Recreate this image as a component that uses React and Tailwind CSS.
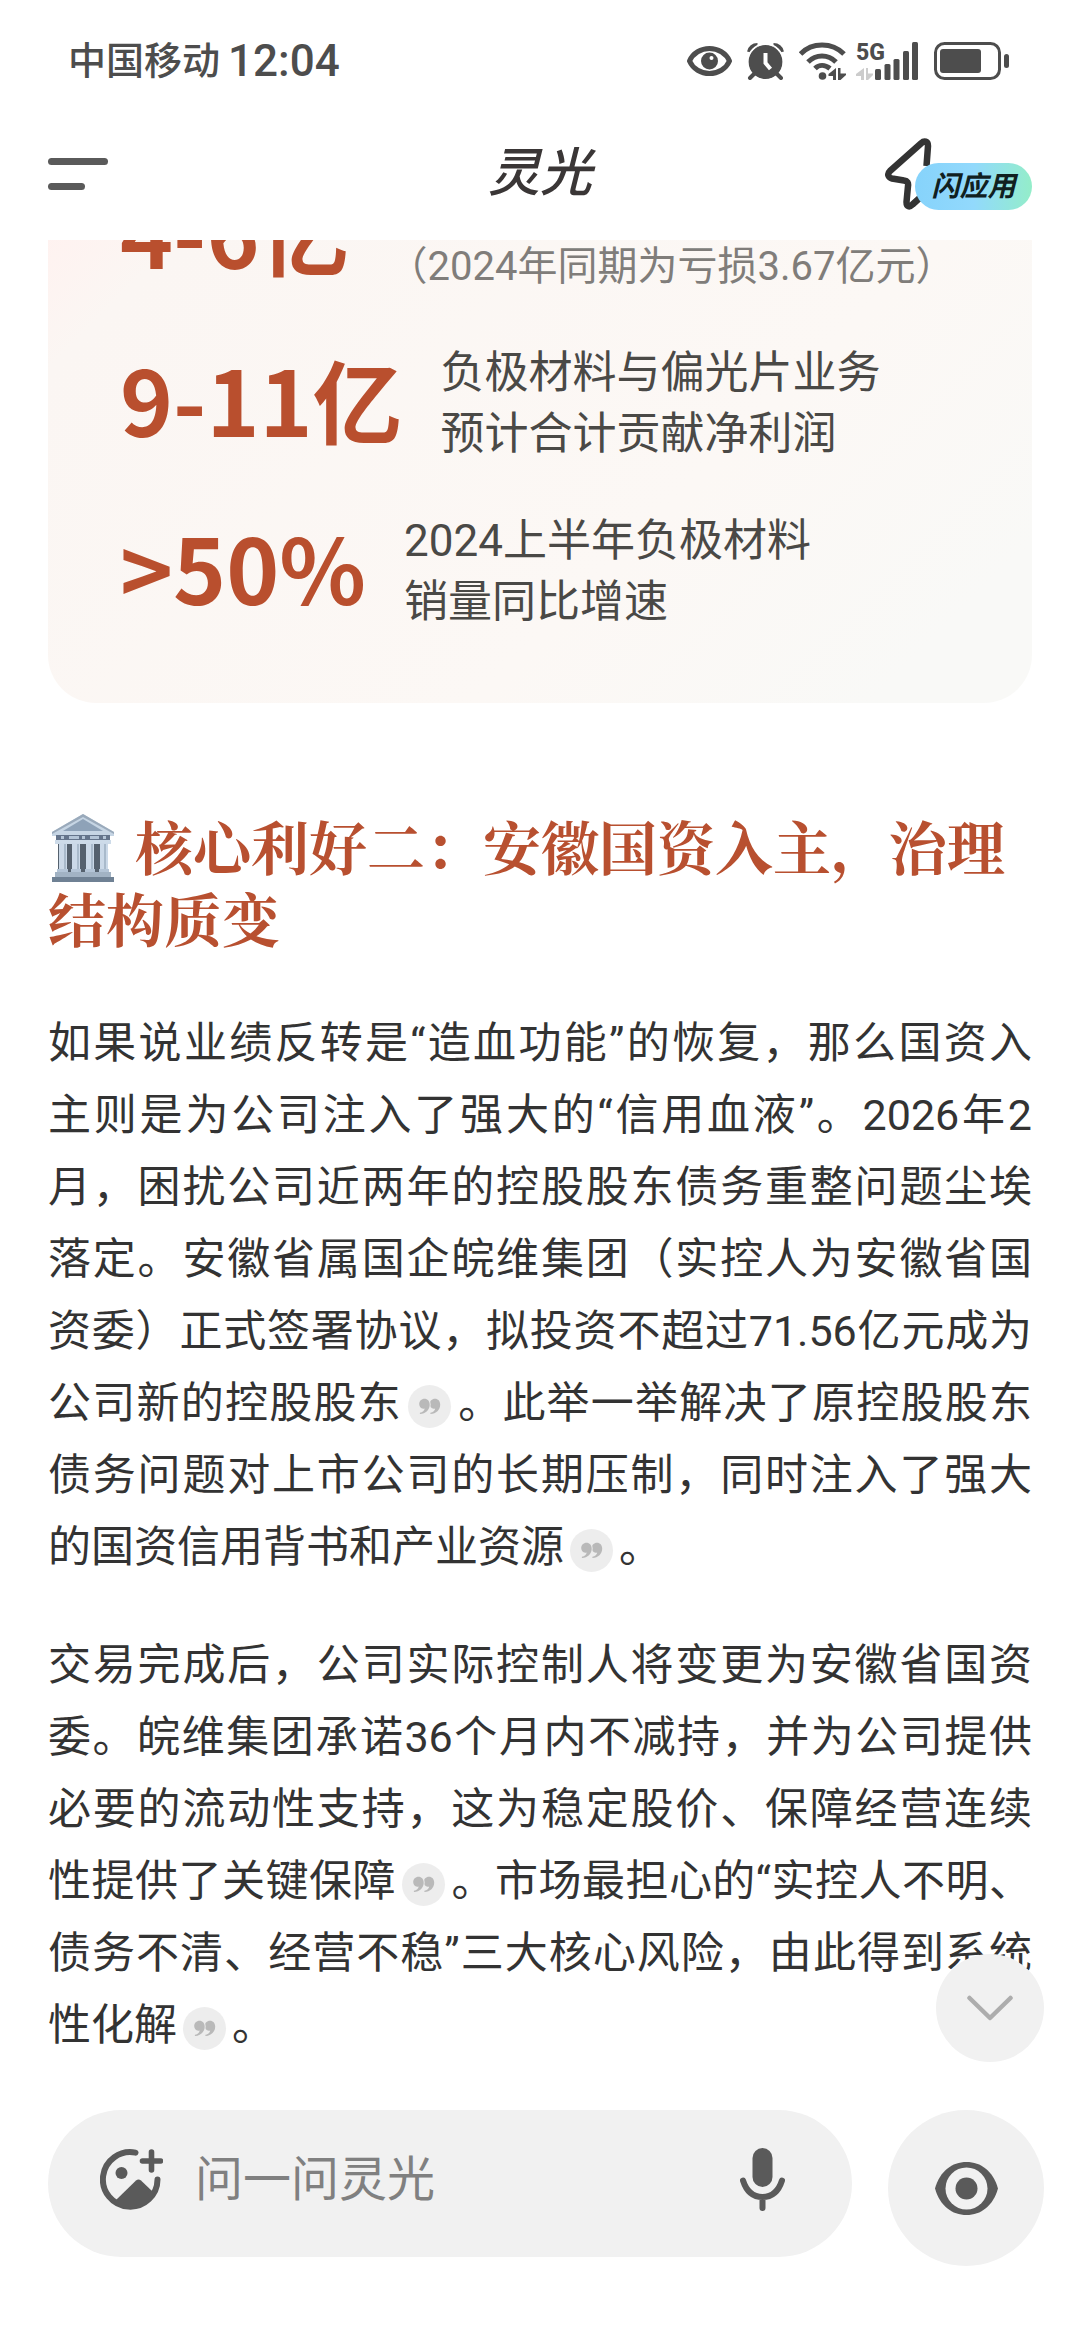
import { useState } from 'react';

const stats = [
  { value: '4-6亿', lines: ['（2024年同期为亏损3.67亿元）'], note: true },
  { value: '9-11亿', lines: ['负极材料与偏光片业务', '预计合计贡献净利润'] },
  { value: '>50%', lines: ['2024上半年负极材料', '销量同比增速'] },
];

function StatusBar() {
  return (
    <div className="flex h-[122px] items-center justify-between pl-[68px] pr-[71px] text-[#4d4d4d]">
      <div className="flex items-center gap-2 font-medium">
        <span className="text-[38px]">中国移动</span>
        <span className="text-[44px]">12:04</span>
      </div>
      <div className="flex items-center">
        {/* eye comfort */}
        <svg className="mr-[15px] h-[30px] w-[45px]" viewBox="0 0 45 30" fill="none">
          <path d="M2.5 15C6 7 14 2.5 22.5 2.5S39 7 42.5 15C39 23 31 27.5 22.5 27.5S6 23 2.5 15z" stroke="currentColor" strokeWidth="5" strokeLinejoin="round" />
          <circle cx="22.5" cy="15" r="8.5" fill="currentColor" />
          <circle cx="24.5" cy="12" r="2" fill="#fff" />
        </svg>
        {/* alarm */}
        <svg className="mr-[15px] h-[37px] w-[37px]" viewBox="0 0 37 37" fill="none" stroke="currentColor">
          <circle cx="18.5" cy="19" r="17" fill="currentColor" stroke="none" />
          <path d="M2 9C3 5 6 2 10.500 2M26.500 2C31 2 34 5 35 9" strokeWidth="4" />
          <circle cx="18.5" cy="19" r="18" stroke="#fff" strokeWidth="1.500" />
          <path d="M7 31l-4 4M30 31l4 4" strokeWidth="4" strokeLinecap="round" />
          <path d="M18.500 10v10l5 6" stroke="#fff" strokeWidth="4" />
        </svg>
        {/* wifi */}
        <svg className="mr-[10px] h-[38px] w-[47px]" viewBox="0 0 47 38" fill="none" stroke="currentColor">
          <path d="M1.500 12C13 0 33 0 45 12M9 20c8-8 20-8 28 0M16 26.500c4-4 10-4 15 0" strokeWidth="5" />
          <circle cx="23.500" cy="34" r="3.800" fill="currentColor" stroke="none" />
          <path d="M37 26v12h-3v-4h-4.500v-2zM39 26v12h2.500l5.500-5v-1.500h-5.500V26z" fill="currentColor" stroke="none" />
        </svg>
        {/* signal */}
        <svg className="mr-[16px] h-[38px] w-[62px] overflow-visible" viewBox="0 0 62 38" fill="currentColor">
          <text x="0" y="18" fontSize="23" fontWeight="800" fontFamily="Roboto">5G</text>
          <path d="M8 26v12H5v-4H0v-2zM10 26v12h2l5-5v-1.500h-5V26z" fill="#cccccc" />
          <rect x="19" y="27" width="6" height="11" rx="1.500" />
          <rect x="28.500" y="22" width="6" height="16" rx="1.500" />
          <rect x="37.500" y="17" width="6" height="21" rx="1.500" />
          <rect x="47" y="9" width="6" height="29" rx="1.500" />
          <rect x="56" y="0" width="6" height="38" rx="1.500" />
        </svg>
        {/* battery */}
        <svg className="h-[38px] w-[75px]" viewBox="0 0 75 38" fill="none">
          <rect x="1.500" y="1.500" width="64" height="35" rx="9" stroke="currentColor" strokeWidth="3" />
          <rect x="6" y="7" width="41" height="24" rx="3" fill="currentColor" />
          <rect x="70" y="12" width="5" height="14" rx="2.500" fill="currentColor" />
        </svg>
      </div>
    </div>
  );
}

function Header() {
  return (
    <header className="relative z-10 bg-white">
      <StatusBar />
      <div className="grid h-[118px] grid-cols-3 items-center px-12 pb-[14px]">
        <button type="button" aria-label="菜单" className="flex flex-col items-start gap-[18px] justify-self-start">
          <span className="h-[7px] w-[60px] rounded-full bg-[#5a5a5a]" />
          <span className="h-[7px] w-[37px] rounded-full bg-[#5a5a5a]" />
        </button>
        <h1 className="justify-self-center text-[52px] leading-none font-medium text-[#3a3636] italic">灵光</h1>
        <button type="button" className="relative h-[72px] w-[147px] justify-self-end">
          <svg className="h-[72px] w-[50px]" viewBox="0 0 50 72" fill="none">
            <path d="M41.500 28L43 8C43 3 39 2.500 36.500 5L5 33C2 36 3 39.500 7 40.500L19 42.500C22.500 43 23.500 45 23 48L21.500 64C21.500 69 24.500 69.500 27.500 66.500L38 57" stroke="#333" strokeWidth="6.500" strokeLinejoin="round" />
          </svg>
          <span className="absolute right-0 bottom-0 flex h-[47px] w-[117px] items-center justify-center rounded-full bg-linear-to-r from-[#86d3fb] via-[#92d9fc] to-[#94edc9] text-[28px] font-bold text-[#10201f] italic">闪应用</span>
        </button>
      </div>
    </header>
  );
}

function StatsCard() {
  return (
    <section className="-mt-[139px] flex flex-col gap-[46px] rounded-[48px] bg-[linear-gradient(135deg,#fff2f0_8%,#fbf6f3_17%,#fcf8f5_65%,#f9f9f7_90%)] px-[72px] pt-[74px] pb-[70px]">
      {stats.map((item) => (
        <div key={item.value} className="flex h-[122px] items-center gap-[38px]">
          <strong className="pb-3 font-['Noto_Sans_CJK_SC',sans-serif] text-[90px] leading-none font-bold text-[#b94f2e]">{item.value}</strong>
          <p className={item.note ? 'self-end text-[40px] leading-[61px] text-[#807d7a]' : 'text-[44px] leading-[61px] text-[#4a4946]'}>
            {item.lines.map((line) => (
              <span key={line} className="block">{line}</span>
            ))}
          </p>
        </div>
      ))}
    </section>
  );
}

function BankIcon() {
  return (
    <svg className="-my-4 mr-[21px] ml-1 inline-block h-[68px] w-[62px] align-[4px]" viewBox="0 0 62 68">
      <path d="M31 0L62 18v4H0v-4z" fill="#c6d5e4" />
      <path d="M31 0L0 18v2L31 3l31 17v-2z" fill="#9aaabb" />
      <path d="M31 5L51 17H11z" fill="#8ea2b8" />
      <path d="M4 21h54v5H4z" fill="#64748b" />
      <path d="M9 22h3v3H9zM17 22h10v3H17zM30 22h3v3h-3zM38 22h9v3h-9zM51 22h3v3h-3z" fill="#b4c5d7" />
      <path d="M3 26h56v4H3z" fill="#cddbe9" />
      <path d="M6 30h50v28H6z" fill="#55616e" />
      <path d="M7 29h8v28H7zM20 29h8v28h-8zM34 29h8v28h-8zM48 29h8v28h-8z" fill="#cbd9e8" />
      <path d="M12 30h2v26h-2zM25 30h2v26h-2zM39 30h2v26h-2zM52 30h2v26h-2z" fill="#a9bacb" />
      <path d="M5 55h11v4H5zM19 55h10v4H19zM33 55h10v4H33zM47 55h10v4H47z" fill="#b4c5d7" />
      <path d="M3 58h56v5H3z" fill="#a2b3c4" />
      <path d="M0 63h62v5H0z" fill="#6f8194" />
    </svg>
  );
}

function Cite() {
  return (
    <button type="button" aria-label="引用来源" className="mx-[6px] inline-block size-[43px] rounded-full bg-[#ededed] align-middle">
      <svg viewBox="0 0 43 43" fill="#b9b9b9">
        <path d="M27 13.800c3 0 5.200 2.300 5.200 5.900 0 5-4 9.100-9.800 9.300v-1.200c2.800-.5 4.500-2.100 4.800-4.300-.5.200-1 .2-1.500.2-2.400 0-4-2-4-4.600 0-2.900 2.300-5.300 5.300-5.300z" />
        <path d="M16.500 13.800c3 0 5.200 2.300 5.200 5.900 0 5-4 9.100-9.800 9.300v-1.200c2.800-.5 4.500-2.100 4.800-4.300-.5.200-1 .2-1.500.2-2.400 0-4-2-4-4.600 0-2.900 2.300-5.300 5.300-5.300z" stroke="#ededed" strokeWidth="2" paintOrder="stroke" />
      </svg>
    </button>
  );
}

function Composer() {
  const [text, setText] = useState('');

  return (
    <footer className="relative z-10 flex items-start gap-9 bg-white pb-[74px] pl-12 pr-9">
      <button type="button" aria-label="回到底部" className="absolute -top-[156px] right-9 flex size-[108px] items-center justify-center rounded-full bg-[#f1f1f1]">
        <svg className="h-[26px] w-[46px]" viewBox="0 0 46 26" fill="none">
          <path d="M2.500 3L23 23L43.500 3" stroke="#adadad" strokeWidth="4.500" strokeLinecap="round" strokeLinejoin="round" />
        </svg>
      </button>
      <div className="flex h-[147px] min-w-0 flex-1 items-center rounded-full bg-[#f1f1f1] pr-[67px] pb-2 pl-[52px]">
        <button type="button" aria-label="添加图片">
          <svg className="h-[62px] w-[63px]" viewBox="0 0 63 62" fill="none" stroke="#5a5a5a">
            <path d="M35.500 3.600A27.300 27.300 0 1 0 57.500 30.500" strokeWidth="6" strokeLinecap="round" />
            <path d="M16 51L36 31.500Q38.500 29.500 41 31.500L52 42L54 44C50 54 41 60 30 60C24 60 19 57 14 54z" fill="#5a5a5a" stroke="none" />
            <circle cx="21.500" cy="24" r="6" fill="#5a5a5a" stroke="none" />
            <path d="M51.500 3v18M42.500 12h18" strokeWidth="5.600" strokeLinecap="round" />
          </svg>
        </button>
        <input
          type="text"
          aria-label="问一问灵光"
          value={text}
          onChange={(e) => setText(e.target.value)}
          placeholder="问一问灵光"
          className="ml-8 h-[72px] min-w-0 flex-1 bg-transparent text-[48px] text-[#333] outline-none placeholder:text-[#808080]"
        />
        <button type="button" aria-label="语音输入">
          <svg className="h-[63px] w-[45px]" viewBox="0 0 45 63" fill="none" stroke="#5a5a5a" strokeWidth="6" strokeLinecap="round">
            <rect x="12.500" y="0" width="20" height="39" rx="10" fill="#5a5a5a" stroke="none" />
            <path d="M3 32.500C6.500 43.500 13 49 22.500 49S38.500 43.500 42 32.500M22.500 50v10" />
          </svg>
        </button>
      </div>
      <button type="button" aria-label="看一看" className="flex size-[156px] shrink-0 items-center justify-center rounded-full bg-[#f1f1f1]">
        <svg className="h-[53px] w-[63px]" viewBox="0 0 63 53">
          <path d="M31.500 0C46 0 58 9 63 26.500C58 44 46 53 31.500 53S5 44 0 26.500C5 9 17 0 31.500 0z" fill="#5a5a5a" />
          <circle cx="31.500" cy="26.500" r="21" fill="#f1f1f1" />
          <circle cx="31.500" cy="26.500" r="11" fill="#5a5a5a" />
        </svg>
      </button>
    </footer>
  );
}

export default function App() {
  return (
    <div lang="zh-CN" className="flex h-screen flex-col overflow-hidden bg-white font-[Roboto,'Noto_Sans_CJK_SC',sans-serif]">
      <Header />
      <main className="min-h-0 flex-1 px-12">
        <StatsCard />

        <h2 className="mt-[106px] font-['Noto_Serif_CJK_SC','Noto_Sans_CJK_SC',serif] text-[58px] leading-[72px] font-bold text-[#b85030]">
          <BankIcon />核心利好二：安徽国资入主，治理结构质变
        </h2>

        <div className="mt-[54px] flex flex-col gap-[46px] text-justify text-[43px] leading-[72px] text-[#333]">
          <p>
            如果说业绩反转是“造血功能”的恢复，那么国资入<span className="whitespace-nowrap">主则</span>是为公司注入了强大的“信用血液”。2026年2月，困扰公司近两年的控股股东债务重整问题尘埃落定。安徽省属国企皖维集团（实控人为安徽省国资委）正式签署协议，拟投资不超过71.56亿元成为公司新的控股股东<Cite />。此举一举解决了原控股股东债务问题对上市公司的长期压制，同时注入了强大的国资信用背书和产业资源<Cite />。
          </p>
          <p>
            交易完成后，公司实际控制人将变更为安徽省国资委。皖维集团承诺36个月内不减持，并为公司提供必要的流动性支持，这为稳定股价、保障经营连续性提供了关键保障<Cite />。市场最担心的“实控人不明、债务不清、经营不稳”三大核心风险，由此得到系统性化解<Cite />。
          </p>
        </div>
      </main>
      <Composer />
    </div>
  );
}
